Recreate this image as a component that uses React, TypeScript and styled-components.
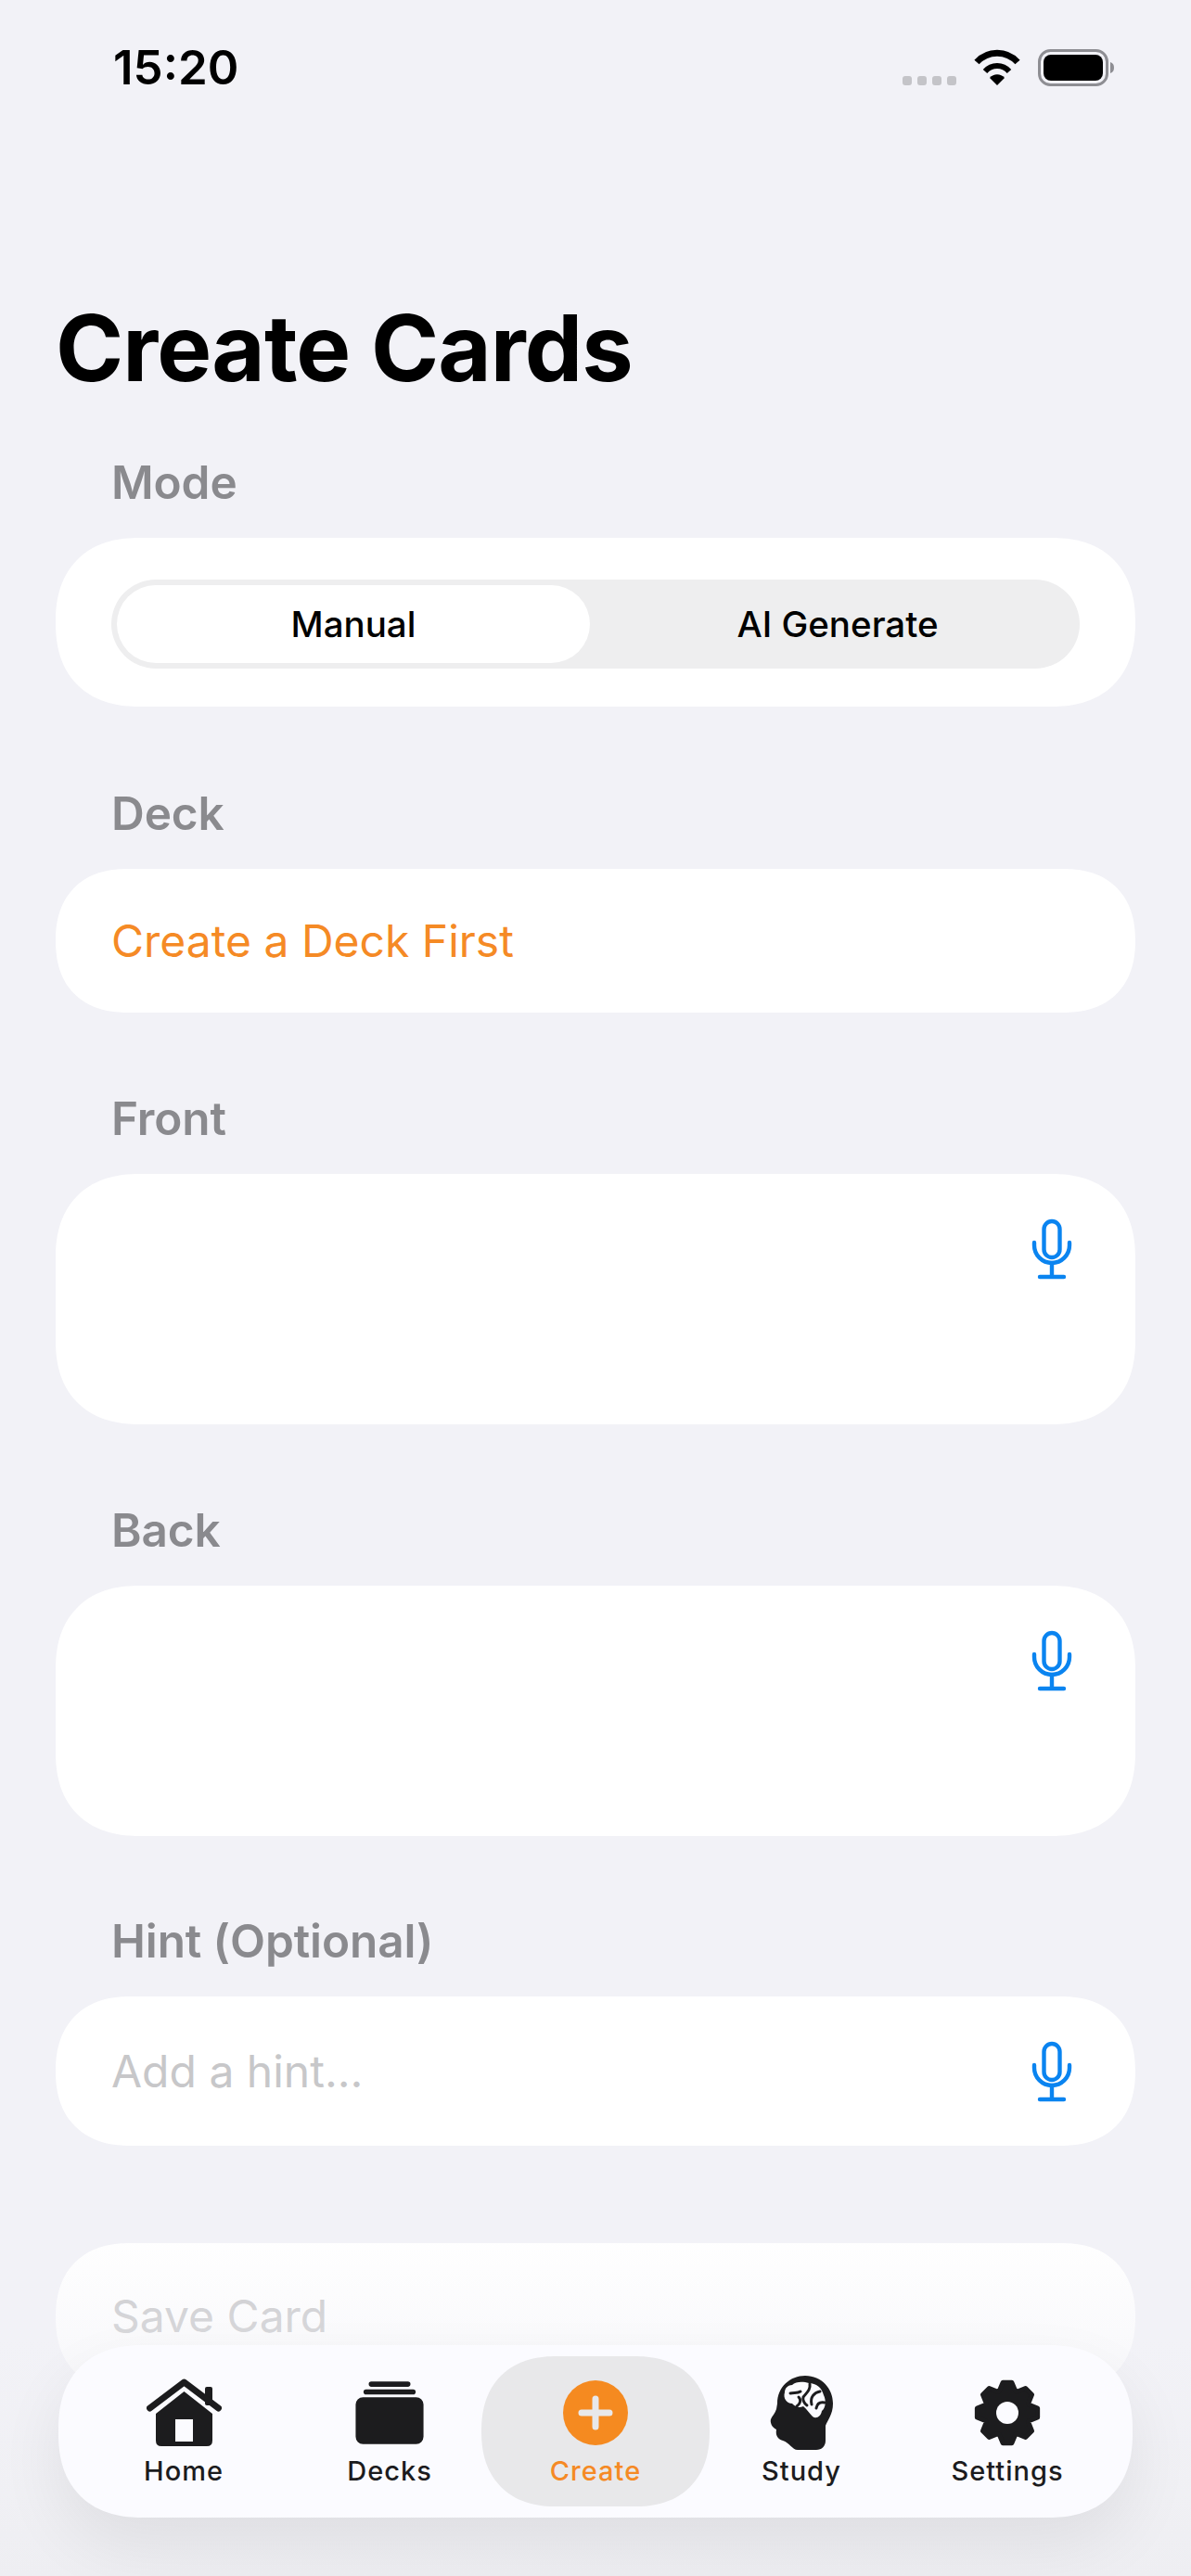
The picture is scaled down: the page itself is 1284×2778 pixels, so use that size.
import React from "react";
import styled, { createGlobalStyle } from "styled-components";
import { IoAlbums } from "react-icons/io5";

const Global = createGlobalStyle`
  html, body { margin: 0; padding: 0; background: #f2f2f7; }
  * { box-sizing: border-box; }
`;
const Screen = styled.div`
  position: relative;
  width: 1284px;
  height: 2778px;
  overflow: hidden;
  background: #f2f2f7;
  font-family: Inter, "Liberation Sans", sans-serif;
`;
const StatusBar = styled.div`
  display: flex;
  justify-content: space-between;
  align-items: flex-start;
  padding: 41px 82px 0 122px;
  height: 317px;
`;
const Time = styled.div`
  font-size: 51px;
  line-height: 64px;
  font-weight: 600;
  color: #000;
`;
const StatusIcons = styled.div`
  display: flex;
  align-items: flex-end;
  gap: 19px;
  padding-top: 12px;
`;
const Dots = styled.div`
  display: flex;
  gap: 6px;
  padding-bottom: 1px;
`;
const Dot = styled.span`
  width: 10px;
  height: 10px;
  border-radius: 3px;
  background: #c4c4c8;
`;
const Content = styled.main`
  padding: 0 60px;
`;
const Title = styled.h1`
  margin: 0 0 57px;
  font-size: 99px;
  line-height: 116px;
  font-weight: 700;
  color: #000;
  letter-spacing: -0.9px;
`;
const Section = styled.section<{ $gap?: number }>`
  margin-bottom: ${(p) => p.$gap ?? 84}px;
`;
const Label = styled.div`
  padding-left: 60px;
  margin-bottom: 30px;
  font-size: 49.5px;
  line-height: 60px;
  font-weight: 600;
  color: #8a8a8e;
  letter-spacing: -0.1px;
`;
const Card = styled.div<{ $h: number }>`
  height: ${(p) => p.$h}px;
  border-radius: 90px;
  corner-shape: superellipse(1.2);
  background: #fff;
`;
const ModeCard = styled(Card)`
  padding: 45px 60px 41px;
`;
const Segment = styled.div`
  display: flex;
  height: 96px;
  border-radius: 48px;
  background: #eeeeef;
  padding: 6px;
`;
const SegItem = styled.div<{ $on?: boolean }>`
  flex: ${(p) => (p.$on ? "0 0 510px" : "1")};
  padding-left: ${(p) => (p.$on ? 0 : 12)}px;
  display: flex;
  align-items: center;
  justify-content: center;
  border-radius: 42px;
  background: ${(p) => (p.$on ? "#fff" : "transparent")};
  font-size: 38.5px;
  font-weight: 500;
  color: #000;
`;
const DeckCard = styled(Card)`
  display: flex;
  align-items: center;
  padding: 0 60px;
  font-size: 48px;
  color: #f58a25;
`;
const AreaCard = styled(Card)`
  display: flex;
  justify-content: flex-end;
  padding: 47px 67px 0 0;
`;
const HintCard = styled(Card)`
  display: flex;
  align-items: center;
  justify-content: space-between;
  padding: 0 67px 0 60px;
`;
const Placeholder = styled.span`
  font-size: 48px;
  color: #c7c7c9;
`;
const SaveCard = styled(Card)`
  padding: 49px 60px 0;
`;
const Fade = styled.div`
  position: absolute;
  left: 0;
  right: 0;
  bottom: 0;
  height: 378px;
  background: linear-gradient(
    to bottom,
    rgba(242, 242, 247, 0) 0%,
    rgba(242, 242, 247, 0.4) 32%,
    rgba(240, 240, 244, 0.95) 75%,
    rgba(238, 238, 242, 1) 100%
  );
`;
const TabBar = styled.nav`
  position: absolute;
  left: 63px;
  top: 2529px;
  width: 1158px;
  height: 186px;
  padding: 0 24px;
  display: grid;
  grid-template-columns: repeat(5, 1fr);
  border-radius: 90px;
  corner-shape: superellipse(1.2);
  background: #fbfbff;
  box-shadow: 0 30px 70px rgba(0, 0, 0, 0.07);
`;
const Tab = styled.div<{ $on?: boolean }>`
  position: relative;
  display: flex;
  flex-direction: column;
  align-items: center;
  padding-top: 28px;
  color: ${(p) => (p.$on ? "#f58a25" : "#1c1c1e")};
  z-index: 0;
  &::before {
    content: "";
    display: ${(p) => (p.$on ? "block" : "none")};
    position: absolute;
    z-index: -1;
    left: -12px;
    right: -12px;
    top: 12px;
    bottom: 12px;
    border-radius: 81px;
    corner-shape: superellipse(1.2);
    background: #e8e8ea;
  }
`;
const TabIcon = styled.div`
  height: 90px;
  display: flex;
  align-items: center;
  justify-content: center;
  font-size: 90px;
`;
const TabLabel = styled.div`
  font-size: 29px;
  line-height: 36px;
  font-weight: 500;
  letter-spacing: 1px;
`;

const Mic = () => (
  <svg width="46" height="68" viewBox="0 0 46 68" fill="none" stroke="#0a84f0" strokeWidth="4.4" strokeLinecap="round">
    <rect x="14.5" y="4" width="17" height="39" rx="8.5" />
    <path d="M4 27v3a19 19 0 0 0 38 0v-3" />
    <path d="M23 49v14M10 64h26" />
  </svg>
);
const Wifi = () => (
  <svg width="50" height="40" viewBox="0 0 50 40">
    <path d="M3 14C15 1 35 1 47 14" fill="none" stroke="#000" strokeWidth="7" />
    <path d="M12 24C19 16 31 16 38 24" fill="none" stroke="#000" strokeWidth="6" />
    <path d="M25 39L17 31C21 26 29 26 33 31Z" fill="#000" />
  </svg>
);
const Battery = () => (
  <svg width="83" height="40" viewBox="0 0 83 40">
    <rect x="1.5" y="1.5" width="73" height="37" rx="12" fill="none" stroke="#8e8e93" strokeWidth="3" />
    <rect x="6" y="6" width="64" height="28" rx="8" fill="#000" />
    <path d="M78 14c3 1 4 3 4 6s-1 5-4 6z" fill="#8e8e93" />
  </svg>
);
const HomeIcon = () => (
  <svg width="81" height="74" viewBox="0 0 81 74" fill="#1c1c1e">
    <rect x="63" y="9" width="8" height="20" rx="2" />
    <path d="M3.5 32L40.5 4L77.5 32" fill="none" stroke="#1c1c1e" strokeWidth="7" strokeLinecap="round" strokeLinejoin="round" />
    <path fillRule="evenodd" d="M40.5 14L71 38V67Q71 73 65 73H16Q10 73 10 67V38ZM31 44V68H50V44Z" />
  </svg>
);
const PlusIcon = () => (
  <svg width="70" height="70" viewBox="0 0 70 70">
    <circle cx="35" cy="35" r="35" fill="#f58a20" />
    <path d="M35 20V50M20 35H50" stroke="#e8e8ea" strokeWidth="7" strokeLinecap="round" />
  </svg>
);
const Head = () => (
  <svg width="70" height="82" viewBox="-1 -1 70 82" fill="#1c1c1e">
    <path d="M38 0C56 0 68 14 68 30C68 42 62 48 60 54L60 70C60 76 56 80 50 80L30 80C24 80 21 72 14 70C8 68 6 64 7 58C2 56 0 50 1 47C2 44 6 40 7 36L8 30C8 12 22 0 38 0Z" />
    <path d="M24 10C28 6 36 6 42 8C50 8 56 13 58 21C61 27 60 35 56 38C55 44 50 47 46 44C42 40 40 36 36 33C30 36 26 32 24 30C18 30 14 24 16 18C16 13 20 10 24 10Z" fill="#fbfbff" />
    <path d="M22 19c4-1 8 0 11-2M31 23c3 3 2 7-2 10M43 9c1 6-3 9-7 14c-1 3 1 7 4 9M54 17c-6 1-11 6-9 14M59 29c-5-1-8 1-9 6" fill="none" stroke="#1c1c1e" strokeWidth="3" strokeLinecap="round" />
  </svg>
);
const gearPoints = Array.from({ length: 8 }, (_, i) => {
  const a = (i * Math.PI) / 4 - Math.PI / 2;
  const pt = (r: number, d: number) =>
    `${(36 + r * Math.cos(a + d)).toFixed(2)},${(36 + r * Math.sin(a + d)).toFixed(2)}`;
  return [pt(25, -0.36), pt(33, -0.15), pt(33, 0.15), pt(25, 0.36)].join(" ");
}).join(" ");
const GearIcon = () => (
  <svg width="72" height="72" viewBox="0 0 72 72">
    <polygon points={gearPoints} fill="#1c1c1e" stroke="#1c1c1e" strokeWidth="5" strokeLinejoin="round" />
    <circle cx="36" cy="36" r="12" fill="#fbfbff" />
  </svg>
);

export default function App() {
  return (
    <Screen>
      <Global />
      <StatusBar>
        <Time>15:20</Time>
        <StatusIcons>
          <Dots>
            <Dot />
            <Dot />
            <Dot />
            <Dot />
          </Dots>
          <Wifi />
          <Battery />
        </StatusIcons>
      </StatusBar>
      <Content>
        <Title>Create Cards</Title>
        <Section $gap={85}>
          <Label>Mode</Label>
          <ModeCard $h={182}>
            <Segment>
              <SegItem $on>Manual</SegItem>
              <SegItem>AI Generate</SegItem>
            </Segment>
          </ModeCard>
        </Section>
        <Section>
          <Label>Deck</Label>
          <DeckCard $h={155}>Create a Deck First</DeckCard>
        </Section>
        <Section>
          <Label>Front</Label>
          <AreaCard $h={270}>
            <Mic />
          </AreaCard>
        </Section>
        <Section $gap={83}>
          <Label>Back</Label>
          <AreaCard $h={270}>
            <Mic />
          </AreaCard>
        </Section>
        <Section $gap={105}>
          <Label>Hint (Optional)</Label>
          <HintCard $h={161}>
            <Placeholder>Add a hint...</Placeholder>
            <Mic />
          </HintCard>
        </Section>
        <SaveCard $h={160}>
          <Placeholder>Save Card</Placeholder>
        </SaveCard>
      </Content>
      <Fade />
      <TabBar>
        <Tab>
          <TabIcon>
            <HomeIcon />
          </TabIcon>
          <TabLabel>Home</TabLabel>
        </Tab>
        <Tab>
          <TabIcon>
            <IoAlbums />
          </TabIcon>
          <TabLabel>Decks</TabLabel>
        </Tab>
        <Tab $on>
          <TabIcon>
            <PlusIcon />
          </TabIcon>
          <TabLabel>Create</TabLabel>
        </Tab>
        <Tab>
          <TabIcon>
            <Head />
          </TabIcon>
          <TabLabel>Study</TabLabel>
        </Tab>
        <Tab>
          <TabIcon>
            <GearIcon />
          </TabIcon>
          <TabLabel>Settings</TabLabel>
        </Tab>
      </TabBar>
    </Screen>
  );
}
